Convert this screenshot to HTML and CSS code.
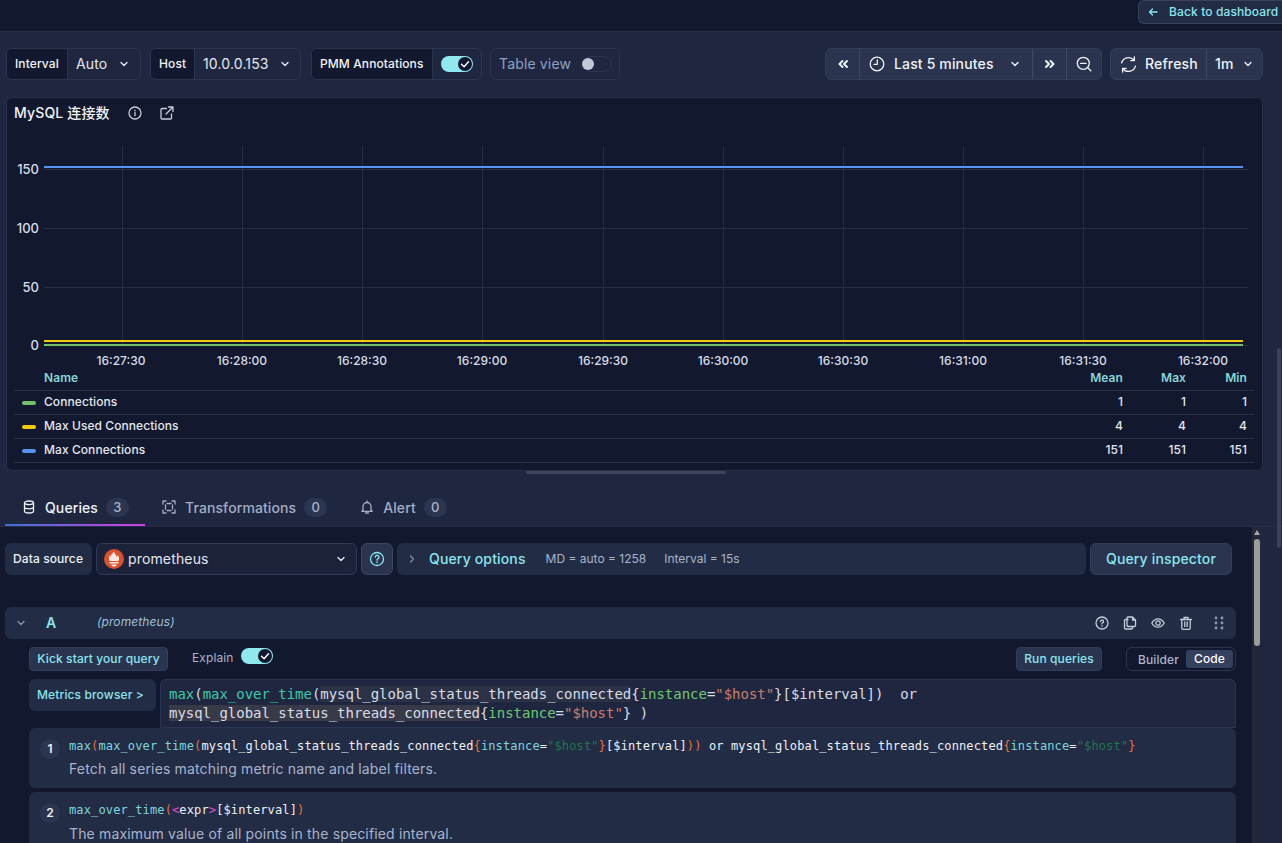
FILE: index.html
```html
<!DOCTYPE html>
<html lang="en">
<head>
<meta charset="utf-8">
<title>MySQL 连接数</title>
<link rel="stylesheet" href="styles.css">
</head>
<body>
<div class="page">
  <header class="topbar">
    <button class="back"><svg class="i10" viewBox="0 0 12 12"><path d="M10 6H2.500M5.500 3 2.500 6l3 3"/></svg><span>Back to dashboard</span></button>
  </header>

  <div class="toolbar">
    <div class="tgroup w-interval"><span class="tlabel l-interval">Interval</span><span class="tvalue">Auto<svg class="chev" viewBox="0 0 12 12"><path d="M3 4.500 6 7.500l3-3"/></svg></span></div>
    <div class="tgroup w-host"><span class="tlabel l-host">Host</span><span class="tvalue">10.0.0.153<svg class="chev" viewBox="0 0 12 12"><path d="M3 4.500 6 7.500l3-3"/></svg></span></div>
    <div class="tgroup w-pmm"><span class="tlabel l-pmm">PMM Annotations</span><span class="tswitch"><span class="switch on"><span class="knob"><svg viewBox="0 0 12 12"><path d="M3 6.200 5.200 8.300 9 4"/></svg></span></span></span></div>
    <div class="tgroup w-table"><span class="tableview">Table view</span><span class="switch off"><span class="knob"></span></span></div>
    <div class="spacer"></div>
    <div class="bgroup w-time">
      <span class="bcell c-34"><svg class="i14" viewBox="0 0 14 14"><path d="M6.500 4 3.500 7l3 3M11 4 8 7l3 3"/></svg></span>
      <span class="bcell c-time"><svg class="i16 clock" viewBox="0 0 16 16"><circle cx="8" cy="8" r="6.800"/><path d="M8.300 4v4.300H5"/></svg><span class="btext">Last 5 minutes</span><svg class="chev" viewBox="0 0 12 12"><path d="M3 4.500 6 7.500l3-3"/></svg></span>
      <span class="bcell c-34"><svg class="i14" viewBox="0 0 14 14"><path d="M3 4l3 3-3 3M7.500 4l3 3-3 3"/></svg></span>
      <span class="bcell c-36"><svg class="i16" viewBox="0 0 16 16"><circle cx="7.300" cy="7.300" r="6"/><path d="M4.500 7.300h5.600M11.800 11.800l3 3"/></svg></span>
    </div>
    <div class="bgroup w-refresh">
      <span class="bcell c-refresh"><svg class="i16 sync" viewBox="0 0 16 16"><path d="M1.500 6.500A6.700 6.700 0 0 1 13 3.800M14.500 9.500A6.700 6.700 0 0 1 3 12.200M13.500 1v3.300h-3.300M2.500 15v-3.300h3.300"/></svg><span class="btext">Refresh</span></span>
      <span class="bcell c-1m"><span class="btext">1m</span><svg class="chev" viewBox="0 0 12 12"><path d="M3 4.500 6 7.500l3-3"/></svg></span>
    </div>
  </div>

  <section class="panel">
    <div class="ptitle">
      <h2>MySQL 连接数</h2>
      <svg class="i14 picon" viewBox="0 0 14 14"><circle cx="7" cy="7" r="6"/><path d="M7 6.500v3.200M7 4.200v.6"/></svg>
      <svg class="i14 picon" viewBox="0 0 14 14"><path d="M11.500 8v4a1 1 0 0 1-1 1H2a1 1 0 0 1-1-1V3.500a1 1 0 0 1 1-1h4.500M8.500 1H13v4.500M13 1 6 8"/></svg>
    </div>
    <svg class="chart" viewBox="0 0 1240 238" width="1240" height="238">
      <g class="grid">
        <path d="M30 41.500H1234M30 100.500H1234M30 159.500H1234M30 217.500H1234"/>
        <path d="M108.500 18V217M228.500 18V217M348.500 18V217M468.500 18V217M589.500 18V217M709.500 18V217M829.500 18V217M949.500 18V217M1069.500 18V217M1189.500 18V217"/>
      </g>
      <path class="s-blue" d="M30 39H1229"/>
      <path class="s-yellow" d="M30 213H1229"/>
      <path class="s-green" d="M30 217H1229"/>
      <g class="yl">
        <text x="25" y="46">150</text>
        <text x="25" y="105">100</text>
        <text x="25" y="164">50</text>
        <text x="25" y="222">0</text>
      </g>
      <g class="xl">
        <text x="107" y="237">16:27:30</text>
        <text x="228" y="237">16:28:00</text>
        <text x="348" y="237">16:28:30</text>
        <text x="468" y="237">16:29:00</text>
        <text x="589" y="237">16:29:30</text>
        <text x="709" y="237">16:30:00</text>
        <text x="829" y="237">16:30:30</text>
        <text x="949" y="237">16:31:00</text>
        <text x="1069" y="237">16:31:30</text>
        <text x="1189" y="237">16:32:00</text>
      </g>
    </svg>
    <table class="legend">
      <thead><tr><th class="nm">Name</th><th>Mean</th><th>Max</th><th>Min</th></tr></thead>
      <tbody>
        <tr><td class="nm"><i class="mk mk-green"></i>Connections</td><td>1</td><td>1</td><td>1</td></tr>
        <tr><td class="nm"><i class="mk mk-yellow"></i>Max Used Connections</td><td>4</td><td>4</td><td>4</td></tr>
        <tr><td class="nm"><i class="mk mk-blue"></i>Max Connections</td><td>151</td><td>151</td><td>151</td></tr>
      </tbody>
    </table>
  </section>
  <div class="handle"></div>

  <nav class="tabs">
    <div class="tab active"><svg class="i14" viewBox="0 0 14 14"><ellipse cx="7" cy="2.800" rx="4.500" ry="1.800"/><path d="M2.500 2.800v8.400c0 1 2 1.800 4.500 1.800s4.500-.8 4.500-1.800V2.800M2.500 7c0 1 2 1.800 4.500 1.800s4.500-.8 4.500-1.800"/></svg><span>Queries</span><b class="count">3</b></div>
    <div class="tab"><svg class="i14" viewBox="0 0 14 14"><path d="M1 4V1h3M10 1h3v3M13 10v3h-3M4 13H1v-3M5 3.500h4M10.500 5v4M9 10.500H5M3.500 9V5"/></svg><span>Transformations</span><b class="count">0</b></div>
    <div class="tab"><svg class="i14" viewBox="0 0 14 14"><path d="M3 10V6.500a4 4 0 0 1 8 0V10l1.200 1.300H1.800ZM5.500 13h3M7 1v1.500"/></svg><span>Alert</span><b class="count">0</b></div>
  </nav>

  <div class="editor">
    <div class="ecol">
      <div class="dsrow">
        <span class="dslabel">Data source</span>
        <div class="dsselect">
          <svg class="prom" viewBox="0 0 24 24"><circle cx="12" cy="12" r="12" fill="#d9512c"/><path fill="#f6e9e3" d="M12 3c.5 2.700 3 3.700 3 6.300 1-.3 1.400-1.300 1.500-2.200 1.300 1.700 1.800 3.400 1.500 5.400-.2 1-.6 1.500-1 2H7c-1.300-2-1.400-4.600-.3-7.200.2 1 .7 1.600 1.400 2C7.900 6.500 10.800 5.500 12 3ZM6.500 15.500h11v2h-11ZM8.500 18.500h7c-.3 1.500-1.700 2.500-3.500 2.500s-3.200-1-3.500-2.500Z"/></svg>
          <span>prometheus</span>
          <svg class="chev" viewBox="0 0 12 12"><path d="M3 4.500 6 7.500l3-3"/></svg>
        </div>
        <span class="help"><svg class="i16" viewBox="0 0 16 16"><circle cx="8" cy="8" r="6.500"/><path d="M6.200 6.200a1.900 1.900 0 1 1 2.700 1.700c-.6.300-.9.700-.9 1.300M8 11v.6"/></svg></span>
        <div class="qopts">
          <svg class="i12 qchev" viewBox="0 0 12 12"><path d="M4.500 3l3 3-3 3"/></svg>
          <strong>Query options</strong>
          <span class="qmeta">MD = auto = 1258</span>
          <span class="qmeta">Interval = 15s</span>
        </div>
        <span class="qinspect">Query inspector</span>
      </div>

      <div class="qhead">
        <svg class="i12 qdown" viewBox="0 0 12 12"><path d="M3 4.500 6 7.500l3-3"/></svg>
        <span class="qid">A</span>
        <em>(prometheus)</em>
        <div class="qactions">
          <svg class="i14" viewBox="0 0 14 14"><circle cx="7" cy="7" r="6"/><path d="M5.500 5.500a1.500 1.500 0 1 1 2.100 1.400c-.4.200-.6.500-.6 1M7 9.800v.5"/></svg>
          <svg class="i14" viewBox="0 0 14 14"><path d="M5 3.500H2.500a1 1 0 0 0-1 1V12a1 1 0 0 0 1 1h6a1 1 0 0 0 1-1v-1.500M5 1h4.500l3 3v5.500a1 1 0 0 1-1 1H5a1 1 0 0 1-1-1V2a1 1 0 0 1 1-1ZM9.500 1v3h3"/></svg>
          <svg class="i14" viewBox="0 0 14 14"><path d="M.8 7C2.400 4.200 4.500 2.800 7 2.800s4.600 1.400 6.200 4.200c-1.600 2.800-3.700 4.200-6.200 4.200S2.400 9.800.8 7Z"/><circle cx="7" cy="7" r="2.200"/></svg>
          <svg class="i14" viewBox="0 0 14 14"><path d="M1.500 3.500h11M5 3.500V1.500h4v2M2.800 3.500v8.800a1 1 0 0 0 1 1h6.400a1 1 0 0 0 1-1V3.500M5.800 6v4.500M8.200 6v4.500"/></svg>
          <svg class="dots" viewBox="0 0 10 14"><circle cx="2" cy="2" r="1.400"/><circle cx="8" cy="2" r="1.400"/><circle cx="2" cy="7" r="1.400"/><circle cx="8" cy="7" r="1.400"/><circle cx="2" cy="12" r="1.400"/><circle cx="8" cy="12" r="1.400"/></svg>
        </div>
      </div>

      <div class="qbody">
        <div class="qcontrols">
          <span class="kick">Kick start your query</span>
          <span class="explain">Explain</span>
          <span class="switch on small"><span class="knob"><svg viewBox="0 0 12 12"><path d="M3 6.200 5.200 8.300 9 4"/></svg></span></span>
          <span class="run">Run queries</span>
          <span class="mode"><span class="m-off">Builder</span><span class="m-on">Code</span></span>
        </div>
        <div class="qinput">
          <span class="metrics">Metrics browser &gt;</span>
          <div class="code"><span class="fn">max</span>(<span class="fn">max_over_time</span>(<span class="hl">mysql_global_status_threads_connected</span>{<span class="lb">instance</span>=<span class="st">"$host"</span>}[$interval])  or
<span class="hl2">mysql_global_status_threads_connected</span>{<span class="lb">instance</span>=<span class="st">"$host"</span>} )</div>
        </div>
        <div class="step">
          <span class="num">1</span>
          <div class="stxt">
            <div class="scode"><span class="f2">max</span><span class="br">(</span><span class="f2">max_over_time</span><span class="br">(</span>mysql_global_status_threads_connected<span class="br">{</span><span class="f2">instance</span>=<span class="s2">"$host"</span><span class="br">}</span>[$interval]<span class="br">))</span> or mysql_global_status_threads_connected<span class="br">{</span><span class="f2">instance</span>=<span class="s2">"$host"</span><span class="br">}</span></div>
            <p>Fetch all series matching metric name and label filters.</p>
          </div>
        </div>
        <div class="step second">
          <span class="num">2</span>
          <div class="stxt">
            <div class="scode"><span class="f2">max_over_time</span><span class="br">(</span><span class="ex">&lt;</span>expr<span class="ex">&gt;</span>[$interval]<span class="br">)</span></div>
            <p>The maximum value of all points in the specified interval.</p>
          </div>
        </div>
      </div>
    </div>
    <div class="iscroll"><span class="arrow"></span><span class="ithumb"></span></div>
  </div>
  <div class="oscroll"></div>
</div>
</body>
</html>
```

FILE: styles.css
```css
* { box-sizing: border-box; }
html, body { margin: 0; padding: 0; height: 100%; }
body { background: #1f2740; overflow: hidden; font-family: Inter, "Noto Sans CJK SC", sans-serif; color: #d8dde8; letter-spacing: .1px; }
svg { fill: none; stroke: currentColor; stroke-width: 1.300; stroke-linecap: round; stroke-linejoin: round; flex: none; display: block; }
.page { position: relative; width: 1282px; height: 843px; overflow: hidden; display: flex; flex-direction: column; }
.i10 { width: 12px; height: 12px; }
.i12 { width: 12px; height: 12px; }
.i14 { width: 14px; height: 14px; }
.i16 { width: 16px; height: 16px; }
.chev { width: 12px; height: 12px; stroke-width: 1.400; }

.topbar { height: 32px; flex: none; background: #12182d; border-bottom: 1px solid #262f49; display: flex; justify-content: flex-end; align-items: flex-start; }
.back { height: 24px; width: 144px; padding: 0 0 0 8px; border: 1px solid #39425d; border-radius: 6px 0 0 6px; border-right: 0; background: #222c45; color: #8ae6ee; font: 500 12px/22px Inter, sans-serif; letter-spacing: .12px; display: flex; align-items: center; gap: 10px; white-space: nowrap; overflow: hidden; }

.toolbar { flex: none; height: 65px; padding: 16px 19px 17px 6px; display: flex; align-items: flex-start; }
.spacer { flex: 1; }
.tgroup { height: 32px; display: flex; align-items: stretch; border: 1px solid #2b3450; border-radius: 6px; overflow: hidden; }
.w-interval { width: 135px; margin-right: 9px; }
.w-host { width: 151px; margin-right: 10px; }
.w-pmm { width: 171px; margin-right: 8px; }
.w-table { width: 130px; align-items: center; padding: 0 0 1px 8px; gap: 11px; }
.tlabel { background: #12182d; color: #f0f3f8; font-size: 12px; font-weight: 500; line-height: 30px; padding-left: 8px; border-right: 1px solid #2b3450; flex: none; }
.l-interval { width: 61px; }
.l-host { width: 44px; }
.l-pmm { width: 121px; }
.tvalue { flex: 1; display: flex; align-items: center; justify-content: space-between; padding: 0 9px 1px 8px; font-size: 14px; letter-spacing: .15px; color: #e4e7ee; }
.w-interval .tvalue { padding-right: 10px; }
.tswitch { flex: 1; display: flex; align-items: center; padding-left: 8px; }
.tableview { font-size: 14px; letter-spacing: .15px; color: #8ea2c2; }
.switch { display: block; position: relative; width: 32px; height: 16px; border-radius: 8px; flex: none; }
.switch.on { background: #8fe9ee; }
.switch.off { width: 30px; background: transparent; border: 1px solid #2b3450; }
.knob { position: absolute; display: block; width: 12px; height: 12px; border-radius: 50%; top: 2px; }
.switch.on .knob { right: 1px; width: 14px; height: 14px; top: 1px; background: #12182d; color: #fff; }
.switch.on .knob svg { width: 14px; height: 14px; stroke-width: 1.200; }
.switch.off .knob { left: -1px; top: 1px; background: #c0c8d8; }
.bgroup { height: 32px; display: flex; border: 1px solid #333c58; border-radius: 6px; background: #2a344f; overflow: hidden; color: #f0f3f8; }
.w-time { width: 277px; margin-right: 8px; }
.w-refresh { width: 153px; }
.bcell { display: flex; align-items: center; border-right: 1px solid #3f4965; }
.bcell:last-child { border-right: 0; }
.c-34 { width: 34px; justify-content: center; }
.c-34 svg { stroke-width: 2; }
.c-36 { flex: 1; justify-content: center; }
.c-time { width: 173px; padding-left: 9px; }
.btext { font-size: 14px; font-weight: 500; letter-spacing: .15px; padding-bottom: 1px; }
.clock { margin-right: 9px; }
.c-time .chev { margin-left: 15px; }
.c-refresh { width: 96px; padding-left: 9px; }
.sync { margin-right: 8px; width: 17px; height: 17px; }
.c-1m { flex: 1; padding-left: 8px; gap: 8px; }

.panel { flex: none; margin: 0 19px 0 6px; height: 374px; background: #12182d; border: 1px solid #262f49; border-radius: 6px; padding: 0 7px; position: relative; }
.ptitle { height: 30px; display: flex; align-items: center; padding-bottom: 1px; color: #c7cdd9; }
.ptitle h2 { margin: 0 18px 2px 0; font-size: 14px; font-weight: 500; letter-spacing: .15px; color: #f2f4f8; }
.ptitle .picon { margin-right: 18px; }
.chart { display: block; overflow: visible; stroke: none; }
.grid path { stroke: #262e44; stroke-width: 1; fill: none; stroke-linecap: butt; }
.s-blue { stroke: #5794f2; stroke-width: 2; stroke-linecap: butt; }
.s-yellow { stroke: #f2cc0c; stroke-width: 2; stroke-linecap: butt; }
.s-green { stroke: #73bf69; stroke-width: 2; stroke-linecap: butt; }
.yl text { text-anchor: end; font: 500 13px Inter, sans-serif; letter-spacing: 0; fill: #d8dde8; stroke: none; }
.xl text { text-anchor: middle; font: 500 12px Inter, sans-serif; letter-spacing: 0; fill: #d8dde8; stroke: none; }
.legend { width: 1240px; border-collapse: collapse; font-size: 12px; font-weight: 500; margin-top: 0; letter-spacing: .07px; }
.legend th { color: #86d5d8; font-weight: 600; text-align: right; height: 24px; padding: 0 6px 0 0; vertical-align: middle; }
.legend td { height: 24px; border-top: 1px solid #262f45; text-align: right; padding: 0 6px 2px 0; color: #e4e7ee; }
.legend tbody tr:last-child td { border-bottom: 1px solid #262f45; }
.legend .nm { text-align: left; padding-left: 30px; position: relative; }
.legend th:nth-child(2), .legend td:nth-child(2) { width: 60px; padding-right: 0; padding-left: 0; }
.legend th:nth-child(3), .legend td:nth-child(3) { width: 63px; padding-right: 0; }
.legend th:nth-child(4), .legend td:nth-child(4) { width: 61px; padding-right: 0; }
.legend th:last-child, .legend td:last-child { padding-right: 7px; width: 68px; }
.mk { position: absolute; left: 8px; top: 10px; width: 14px; height: 4px; border-radius: 2px; }
.mk-green { background: #73bf69; }
.mk-yellow { background: #f2cc0c; }
.mk-blue { background: #5794f2; }
.handle { width: 200px; height: 4px; margin: -1px 0 0 526px; background: #3c455c; border-radius: 2px; flex: none; }

.tabs { flex: none; height: 37px; margin-top: 16px; padding-left: 5px; display: flex; border-bottom: 1px solid #262f49; color: #a3aec4; }
.tab { height: 36px; display: flex; align-items: center; gap: 9px; font-size: 14px; font-weight: 500; letter-spacing: .1px; padding: 0 0 2px 17px; margin-right: 16px; position: relative; }
.tab.active { color: #eef1f6; width: 140px; margin-right: 0; }
.tab.active::after { content: ""; position: absolute; left: 0; right: 0; bottom: 0; height: 2px; background: linear-gradient(90deg, #3d71d9, #d43fe0); }
.count { font-weight: 500; font-size: 13px; min-width: 23px; height: 19px; margin-left: -1px; border-radius: 10px; background: #2b3550; color: #a9b4cc; text-align: center; line-height: 19px; }

.editor { flex: 1; min-height: 0; display: flex; width: 1262px; background: #12182d; overflow: hidden; }
.ecol { flex: 1; min-width: 0; padding: 16px 16px 0 5px; }
.iscroll { width: 10px; flex: none; background: #222739; position: relative; }
.arrow { position: absolute; left: 2px; top: 3px; border: 3px solid transparent; border-bottom: 5px solid #a5a5a5; border-top: 0; }
.ithumb { position: absolute; left: 2px; top: 12px; width: 6px; height: 107px; border-radius: 3px; background: #9c9c9c; }
.oscroll { position: absolute; right: 1px; top: 348px; width: 4px; height: 200px; border-radius: 2px; background: #3b435c; }

.dsrow { display: flex; gap: 4px; height: 32px; }
.dslabel { width: 87px; background: #222c45; border-radius: 6px; color: #eef1f6; font-size: 12px; font-weight: 500; line-height: 32px; padding-left: 8px; }
.dsselect { width: 261px; border: 1px solid #2f3956; border-radius: 6px; background: #1b2239; display: flex; align-items: center; padding: 0 9px 1px 7px; font-size: 14px; letter-spacing: .15px; color: #e4e7ee; }
.prom { width: 20px; height: 20px; stroke: none; margin-right: 4px; }
.dsselect .chev { margin-left: auto; }
.help { width: 32px; border: 1px solid #3b4562; border-radius: 6px; background: #2a344f; display: flex; align-items: center; justify-content: center; color: #8ae6ee; }
.qopts { flex: 1; background: #222c45; border-radius: 6px; display: flex; align-items: center; padding: 0 0 1px 9px; font-size: 12px; letter-spacing: 0; color: #a9b4cc; }
.qchev { margin-right: 11px; color: #7f8aa3; }
.qopts strong { font-size: 14px; font-weight: 500; letter-spacing: .15px; color: #8ae6ee; margin-right: 20px; }
.qmeta { margin-right: 18px; }
.qinspect { width: 142px; margin-right: 4px; background: #2a344f; border: 1px solid #333c58; border-radius: 6px; color: #8ae6ee; font-size: 14px; font-weight: 500; letter-spacing: .15px; line-height: 30px; text-align: center; }

.qhead { height: 32px; margin-top: 32px; background: #222c45; border-radius: 6px; display: flex; align-items: center; padding: 0 0 1px 10px; color: #8a95ab; }
.qid { width: 51px; margin-left: 19px; font-size: 14px; font-weight: 600; color: #8ae6ee; }
.qhead em { font-size: 12px; color: #9fc0d8; margin-bottom: 2px; }
.qactions { margin-left: auto; display: flex; align-items: center; gap: 14px; padding-right: 12px; color: #c5ccda; }
.dots { width: 10px; height: 14px; fill: #8e99af; stroke: none; margin-left: 7px; }

.qbody { padding-left: 24px; }
.qcontrols { display: flex; align-items: center; height: 24px; margin-top: 8px; }
.kick { width: 139px; height: 24px; background: #2a344f; border: 1px solid #333c58; border-radius: 4px; color: #8ae6ee; font-size: 12px; font-weight: 500; line-height: 22px; text-align: center; }
.explain { font-size: 12px; color: #a9b4cc; margin-left: 24px; margin-right: 8px; position: relative; top: -2px; }
.switch.small { height: 16px; position: relative; top: -3px; }
.run { margin-left: auto; width: 86px; height: 24px; background: #2a344f; border: 1px solid #333c58; border-radius: 4px; color: #8ae6ee; font-size: 12px; font-weight: 500; line-height: 22px; text-align: center; }
.mode { margin-left: 24px; width: 110px; height: 24px; border: 1px solid #2b3450; border-radius: 6px; display: flex; align-items: center; justify-content: space-between; padding: 2px; font-size: 12px; font-weight: 500; color: #a9b4cc; }
.m-off { padding-left: 9px; }
.m-on { width: 47px; height: 18px; line-height: 18px; text-align: center; background: #353f5e; color: #fff; border-radius: 3px; }

.qinput { display: flex; margin-top: 8px; gap: 4px; }
.metrics { width: 127px; height: 32px; background: #222c45; border-radius: 6px; color: #8ae6ee; font-size: 12px; font-weight: 500; line-height: 32px; padding-left: 8px; letter-spacing: .13px; }
.code { flex: 1; height: 49px; background: #1f2740; border: 1px solid #2b3450; border-radius: 6px 6px 0 0; padding: 5px 8px; font: 14px/19px "DejaVu Sans Mono", monospace; letter-spacing: -.025px; color: #d8dde8; white-space: pre; }
.fn { color: #3fc7a8; }
.lb { color: #6fc772; }
.st { color: #c97f6d; }
.hl { background: #2c3246; }
.hl2 { background: #383a48; }
.step { display: flex; min-height: 60px; margin-top: 4px; background: #222c45; border-radius: 6px; padding: 9px 11px; gap: 9px; }
.qinput + .step { margin-top: 0; }
.step.second { height: 70px; }
.num { width: 20px; height: 20px; margin-top: 2px; border-radius: 50%; background: #2b3550; color: #eef1f6; font-size: 12px; font-weight: 600; line-height: 20px; text-align: center; flex: none; }
.scode { font: 12px/18px "DejaVu Sans Mono", monospace; letter-spacing: .13px; color: #eef1f6; white-space: pre; }
.f2 { color: #7fd5dc; }
.br { color: #e8703a; }
.s2 { color: #22744f; }
.ex { color: #e04bd6; }
.stxt p { margin: 5px 0 0; font-size: 14px; line-height: 18px; letter-spacing: .15px; color: #a9b4cc; }
.step.second .stxt p { margin-top: 6px; }
```
